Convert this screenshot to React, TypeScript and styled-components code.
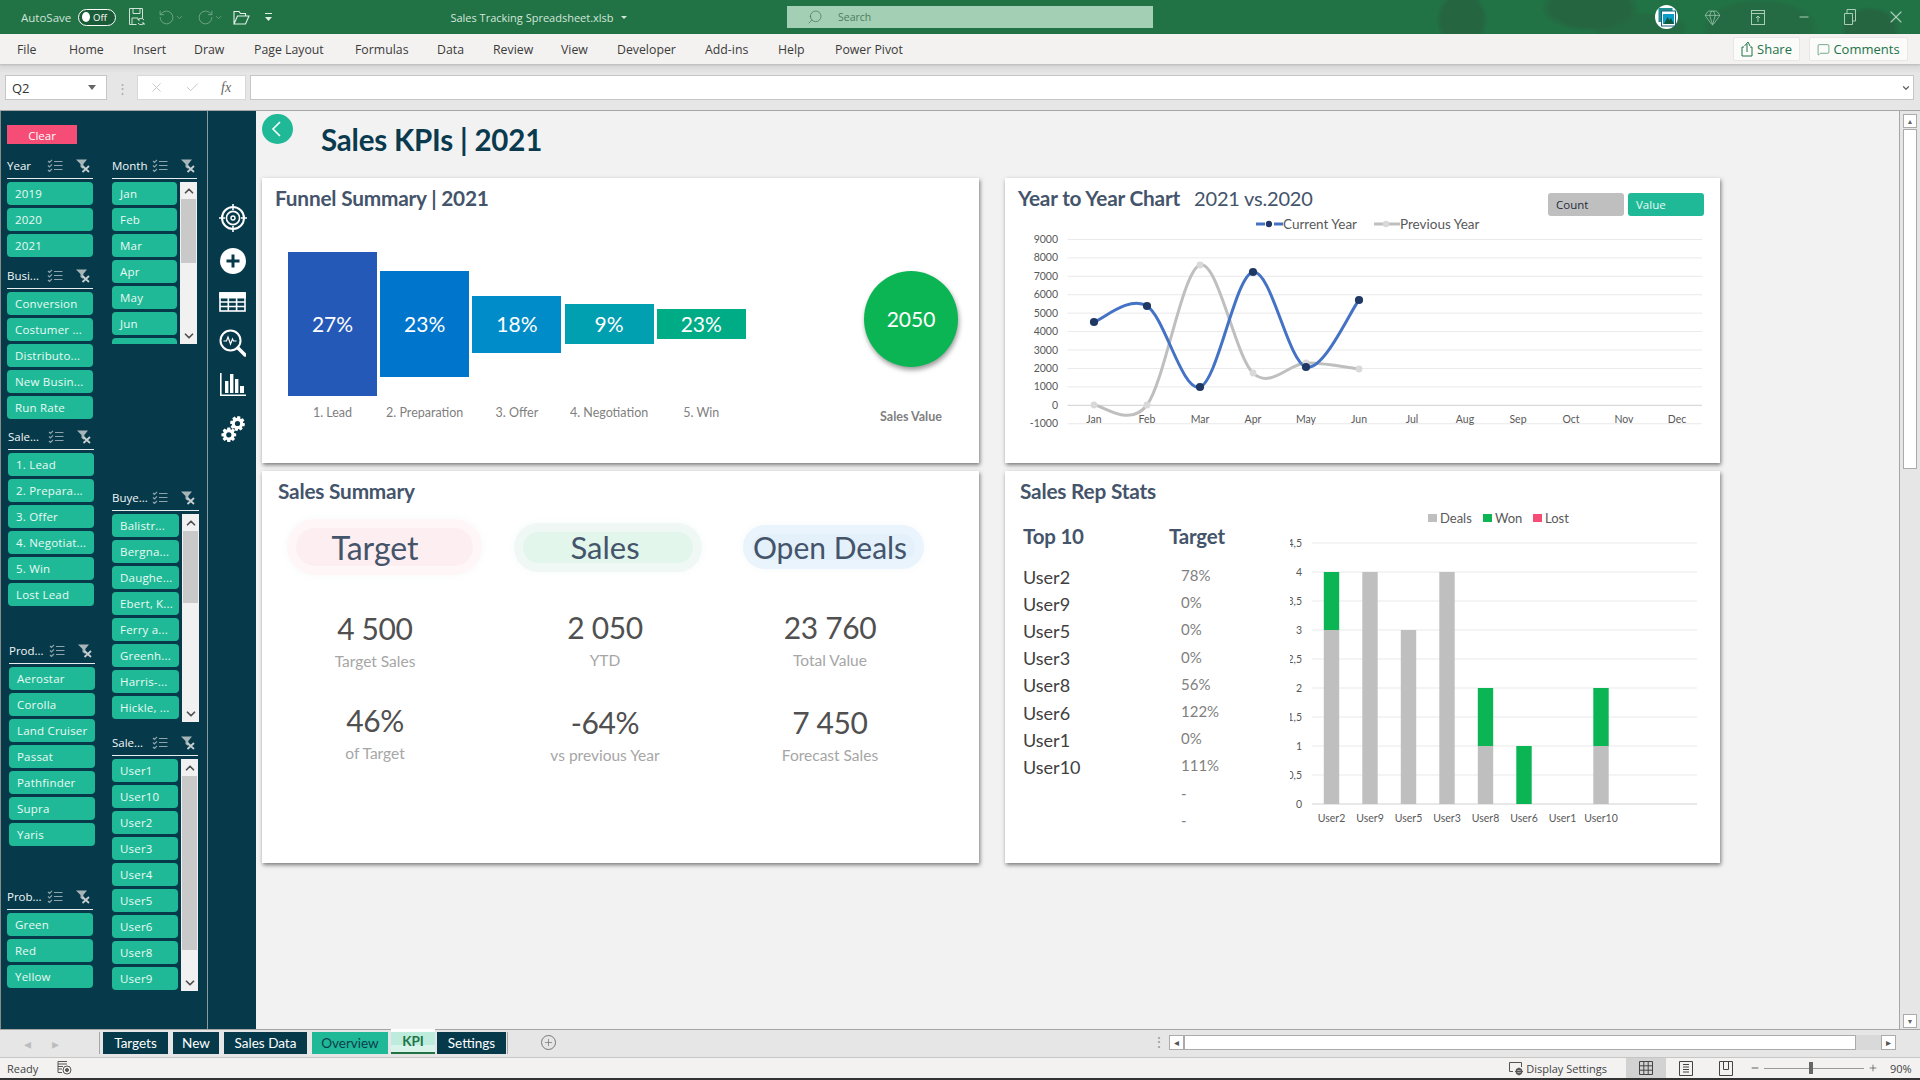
import { FC } from 'react'
import styled, { createGlobalStyle } from 'styled-components'
import { Check, ChevronDown, ChevronUp, Gem, Minus, MessageSquare, Plus, RotateCcw, RotateCw, Search, X } from 'lucide-react'

const UI_FONT = '"Open Sans", "Noto Sans", sans-serif'
const CAL_FONT = 'Lato, "Open Sans", sans-serif'

const TEAL = '#20b997'
const NAVY = '#063a4b'
const SLATE = '#44546a'

const GlobalStyle = createGlobalStyle`
  html, body {
    margin: 0;
    padding: 0;
    width: 1920px;
    height: 1080px;
    overflow: hidden;
    font-family: ${UI_FONT};
  }
  * { box-sizing: border-box; }
`

/* ---------- slicer data ---------- */

type SlicerData = { name: string; items: string[]; shift?: number; top: number }

const leftSlicers: SlicerData[] = [
  { name: 'Year', items: ['2019', '2020', '2021'], top: 10 },
  { name: 'Busi...', items: ['Conversion', 'Costumer ...', 'Distributo...', 'New Busin...', 'Run Rate'], top: 7 },
  { name: 'Sale...', shift: 1, items: ['1. Lead', '2. Prepara...', '3. Offer', '4. Negotiat...', '5. Win', 'Lost Lead'], top: 6 },
  { name: 'Prod...', shift: 2, items: ['Aerostar', 'Corolla', 'Land Cruiser', 'Passat', 'Pathfinder', 'Supra', 'Yaris'], top: 33 },
  { name: 'Prob...', items: ['Green', 'Red', 'Yellow'], top: 39 }
]

const months = ['Jan', 'Feb', 'Mar', 'Apr', 'May', 'Jun', 'Jul']
const buyers = ['Balistr...', 'Bergna...', 'Daughe...', 'Ebert, K...', 'Ferry a...', 'Greenh...', 'Harris-...', 'Hickle, ...']
const reps = ['User1', 'User10', 'User2', 'User3', 'User4', 'User5', 'User6', 'User8', 'User9']

/* ---------- small drawn icons ---------- */

const ChecklistIcon = () => (
  <svg width="16" height="13" viewBox="0 0 16 13" fill="none" stroke="#8ea3aa" strokeWidth="1.2">
    <path d="M1 2l1.5 1.5L5 .8M1 6.5L2.500 8 5 5.3M1 11l1.5 1.5L5 9.8" />
    <path d="M7 2.500h8.500M7 6.500h8.500M7 10.500h8.500" />
  </svg>
)

const ClearFilterIcon = () => (
  <svg width="16" height="14" viewBox="0 0 16 14">
    <path d="M1 .5h11L8.3 5v5L5.5 8V5z" fill="#a7b4b8" />
    <path d="M7.5 7l6.5 6M14 7l-6.500 6" stroke="#c7cfd1" strokeWidth="1.8" />
  </svg>
)

const TargetIcon = () => (
  <svg width="28" height="28" viewBox="0 0 28 28" fill="none" stroke="#fff">
    <circle cx="14" cy="14" r="11" strokeWidth="2" />
    <circle cx="14" cy="14" r="6.6" strokeWidth="1.6" />
    <circle cx="14" cy="14" r="2" strokeWidth="1.4" />
    <path d="M14 0v6M14 22v6M0 14h6M22 14h6" strokeWidth="1.6" />
  </svg>
)

const AddIcon = () => (
  <svg width="26" height="26" viewBox="0 0 26 26">
    <circle cx="13" cy="13" r="13" fill="#fff" />
    <path d="M13 6.500v13M6.500 13h13" stroke={NAVY} strokeWidth="3" />
  </svg>
)

const TableIcon = () => (
  <svg width="27" height="20" viewBox="0 0 27 20" fill="none" stroke="#fff" strokeWidth="1.6">
    <rect x="1" y="1" width="25" height="18" />
    <path d="M1 5.500h25M1 10h25M1 14.500h25M9.300 5.500V19M17.600 5.500V19" />
    <rect x="1" y="1" width="25" height="4.500" fill="#fff" />
  </svg>
)

const PulseSearchIcon = () => (
  <svg width="27" height="28" viewBox="0 0 27 28" fill="none" stroke="#fff">
    <circle cx="11.500" cy="11.500" r="10" strokeWidth="2" />
    <path d="M4.500 12h3l1.500-4 2.500 7 2-5 1 2h3" strokeWidth="1.2" />
    <path d="M19 19l7 7" strokeWidth="3.4" strokeLinecap="round" />
  </svg>
)

const BarsIcon = () => (
  <svg width="26" height="24" viewBox="0 0 26 24" fill="#fff" stroke="none">
    <rect x="5" y="8" width="3.4" height="12" />
    <rect x="10" y="1" width="3.4" height="19" />
    <rect x="15" y="6" width="3.4" height="14" />
    <rect x="20" y="13" width="4" height="7" />
    <path d="M0 0h1.600v21.400H26V23H0z" />
  </svg>
)

const gearPath = (cx: number, cy: number, outer: number, inner: number, hole: number, start: number) => {
  const teeth = 8
  const step = (Math.PI * 2) / teeth
  const pts: string[] = []
  for (let i = 0; i < teeth; i++) {
    const a = start + i * step
    const at = (r: number, o: number) => `${(cx + r * Math.cos(a + o)).toFixed(2)} ${(cy + r * Math.sin(a + o)).toFixed(2)}`
    pts.push(at(inner, -step * 0.42), at(outer, -step * 0.24), at(outer, step * 0.24), at(inner, step * 0.42))
  }
  const ring = `M${cx - hole} ${cy}a${hole} ${hole} 0 1 0 ${hole * 2} 0a${hole} ${hole} 0 1 0 ${-hole * 2} 0z`
  return `M${pts.join('L')}z${ring}`
}

const GearsIcon = () => (
  <svg width="24" height="26" viewBox="0 0 24 26">
    <path d={gearPath(16.5, 7.5, 7.5, 5.6, 2.6, 0.2)} fill="#fff" fillRule="evenodd" />
    <path d={gearPath(7.8, 18.8, 7.5, 5.6, 2.6, 0)} fill="#fff" fillRule="evenodd" />
  </svg>
)

/* ---------- chart helpers ---------- */

type Pt = [number, number]

const smoothPath = (pts: Pt[]) => {
  let d = `M${pts[0][0]} ${pts[0][1]}`
  for (let i = 0; i < pts.length - 1; i++) {
    const p0 = pts[Math.max(i - 1, 0)]
    const p1 = pts[i]
    const p2 = pts[i + 1]
    const p3 = pts[Math.min(i + 2, pts.length - 1)]
    const c1x = p1[0] + (p2[0] - p0[0]) / 6
    const c1y = p1[1] + (p2[1] - p0[1]) / 6
    const c2x = p2[0] - (p3[0] - p1[0]) / 6
    const c2y = p2[1] - (p3[1] - p1[1]) / 6
    d += ` C${c1x} ${c1y} ${c2x} ${c2y} ${p2[0]} ${p2[1]}`
  }
  return d
}

const monthNames = ['Jan', 'Feb', 'Mar', 'Apr', 'May', 'Jun', 'Jul', 'Aug', 'Sep', 'Oct', 'Nov', 'Dec']
const monthX = (i: number) => 1094 + i * 53
const valueY = (v: number) => 405.3 - v * 0.01843
const currentYear: Pt[] = [322, 306, 387, 272, 367, 300].map((y, i) => [monthX(i), y])
const previousYear: Pt[] = [405, 405, 265, 373, 363, 369].map((y, i) => [monthX(i), y])

const YearChart = () => (
  <ChartSvg width="715" height="240" viewBox="1005 216 715 240">
    <g fontFamily={CAL_FONT} fontSize="13.5" fill="#595959">
      <path d="M1256 224h9M1274 224h9" stroke="#4472c4" strokeWidth="3" />
      <circle cx="1269" cy="224" r="3.2" fill="#1f3864" />
      <text x="1283" y="228.500">Current Year</text>
      <path d="M1374 224h26" stroke="#bfbfbf" strokeWidth="3" />
      <circle cx="1386" cy="224" r="3.2" fill="#d9d9d9" />
      <text x="1400" y="228.500">Previous Year</text>
    </g>
    <g stroke="#e9e9e9" strokeWidth="1">
      {[9, 8, 7, 6, 5, 4, 3, 2, 1, -1].map(n => (
        <line key={n} x1="1067.500" x2="1702" y1={valueY(n * 1000)} y2={valueY(n * 1000)} />
      ))}
    </g>
    <line x1="1067.500" x2="1702" y1={valueY(0)} y2={valueY(0)} stroke="#d0d0d0" />
    <g fontFamily={CAL_FONT} fontSize="10.500" fill="#595959" textAnchor="end">
      {[9, 8, 7, 6, 5, 4, 3, 2, 1, 0, -1].map(n => (
        <text key={n} x="1058" y={valueY(n * 1000) + 3.5}>
          {n * 1000}
        </text>
      ))}
    </g>
    <g fontFamily={CAL_FONT} fontSize="10.500" fill="#595959" textAnchor="middle">
      {monthNames.map((m, i) => (
        <text key={m} x={monthX(i)} y="423">
          {m}
        </text>
      ))}
    </g>
    <path d={smoothPath(previousYear)} fill="none" stroke="#bfbfbf" strokeWidth="3" strokeLinecap="round" />
    <path d={smoothPath(currentYear)} fill="none" stroke="#4472c4" strokeWidth="3" strokeLinecap="round" />
    {previousYear.map(([x, y]) => (
      <circle key={x} cx={x} cy={y} r="3.4" fill="#d9d9d9" />
    ))}
    {currentYear.map(([x, y]) => (
      <circle key={x} cx={x} cy={y} r="4.1" fill="#1f3864" />
    ))}
  </ChartSvg>
)

const repBars = [
  { name: 'User2', deals: 3, won: 1 },
  { name: 'User9', deals: 4, won: 0 },
  { name: 'User5', deals: 3, won: 0 },
  { name: 'User3', deals: 4, won: 0 },
  { name: 'User8', deals: 1, won: 1 },
  { name: 'User6', deals: 0, won: 1 },
  { name: 'User1', deals: 0, won: 0 },
  { name: 'User10', deals: 1, won: 1 }
]
const BASE_Y = 804
const UNIT = 58

const RepChart = () => (
  <ChartSvg width="430" height="358" viewBox="1290 505 430 358">
    <g fontFamily={CAL_FONT} fontSize="13" fill="#595959">
      <rect x="1428" y="514" width="9" height="8" fill="#bfbfbf" />
      <text x="1440" y="522.500">Deals</text>
      <rect x="1483" y="514" width="9" height="8" fill="#0bb553" />
      <text x="1495" y="522.500">Won</text>
      <rect x="1533" y="514" width="9" height="8" fill="#f54d75" />
      <text x="1545" y="522.500">Lost</text>
    </g>
    {['4,5', '4', '3,5', '3', '2,5', '2', '1,5', '1', '0,5', '0'].map((label, i) => {
      const y = 543 + i * 29
      return (
        <g key={label}>
          <line x1="1312" x2="1697" y1={y} y2={y} stroke={i === 9 ? '#d0d0d0' : '#e9e9e9'} />
          <text x="1302" y={y + 3.5} textAnchor="end" fontFamily={CAL_FONT} fontSize="10.500" fill="#595959">
            {label}
          </text>
        </g>
      )
    })}
    {repBars.map((b, i) => {
      const cx = 1331.5 + i * 38.5
      return (
        <g key={b.name}>
          <rect x={cx - 7.7} y={BASE_Y - b.deals * UNIT} width="15.400" height={b.deals * UNIT} fill="#bfbfbf" />
          <rect x={cx - 7.7} y={BASE_Y - (b.deals + b.won) * UNIT} width="15.400" height={b.won * UNIT} fill="#0bb553" />
          <text x={cx} y="822" textAnchor="middle" fontFamily={CAL_FONT} fontSize="10.500" fill="#595959">
            {b.name}
          </text>
        </g>
      )
    })}
  </ChartSvg>
)

/* ---------- parts ---------- */

const SlicerHeadRow: FC<{ name: string }> = ({ name }) => (
  <SlicerHead>
    <SlicerName>{name}</SlicerName>
    <ChecklistIcon />
    <ClearFilterIcon />
  </SlicerHead>
)

const ScrollBar: FC<{ thumb: number }> = ({ thumb }) => (
  <ScrollTrack>
    <ScrollArrow>
      <ChevronUp size={14} strokeWidth={3} />
    </ScrollArrow>
    <ScrollThumb $h={thumb} />
    <ScrollArrow $end>
      <ChevronDown size={14} strokeWidth={3} />
    </ScrollArrow>
  </ScrollTrack>
)

const ScrollSlicer: FC<{ name: string; items: string[]; top: number; width: number; height: number; thumb: number }> = ({
  name,
  items,
  top,
  width,
  height,
  thumb
}) => (
  <Slicer $top={top} $width={width}>
    <SlicerHeadRow name={name} />
    <SlicerBody $height={height}>
      <SlicerList>
        {items.map(item => (
          <SlicerItem key={item}>{item}</SlicerItem>
        ))}
      </SlicerList>
      <ScrollBar thumb={thumb} />
    </SlicerBody>
  </Slicer>
)

const Stat: FC<{ value: string; label: string; top: number }> = ({ value, label, top }) => (
  <StatBlock $top={top}>
    <StatValue>{value}</StatValue>
    <StatLabel>{label}</StatLabel>
  </StatBlock>
)

const summary = [
  {
    pill: 'Target', width: 177, height: 38, core: '#fdeef1', glow: '#fff6f8', font: 32, nudge: 18,
    stats: [{ value: '4 500', label: 'Target Sales', top: 36 }, { value: '46%', label: 'of Target', top: 29 }]
  },
  {
    pill: 'Sales', width: 170, height: 31, core: '#e2f6eb', glow: '#f0f8f6', font: 31, nudge: 6,
    stats: [{ value: '2 050', label: 'YTD', top: 35 }, { value: '-64%', label: 'vs previous Year', top: 32 }]
  },
  {
    pill: 'Open Deals', width: 163, height: 26, core: '#e4f1fb', glow: '#eaf4fc', font: 30, nudge: 7,
    stats: [{ value: '23 760', label: 'Total Value', top: 35 }, { value: '7 450', label: 'Forecast Sales', top: 32 }]
  }
]

const funnel = [
  { label: '1. Lead', pct: '27%', height: 144, color: '#2559b7' },
  { label: '2. Preparation', pct: '23%', height: 106, color: '#0075cc' },
  { label: '3. Offer', pct: '18%', height: 57, color: '#008bc9' },
  { label: '4. Negotiation', pct: '9%', height: 40, color: '#00a0b0' },
  { label: '5. Win', pct: '23%', height: 30, color: '#00ac85' }
]

const repRows: [string, string][] = [
  ['User2', '78%'], ['User9', '0%'], ['User5', '0%'], ['User3', '0%'], ['User8', '56%'],
  ['User6', '122%'], ['User1', '0%'], ['User10', '111%'], ['', '-'], ['', '-']
]

const menuItems = [
  ['File', 52], ['Home', 64], ['Insert', 61], ['Draw', 60], ['Page Layout', 101], ['Formulas', 82], ['Data', 56],
  ['Review', 68], ['View', 56], ['Developer', 88], ['Add-ins', 73], ['Help', 57], ['Power Pivot', 80]
] as const

const tabs: { name: string; width: number; kind: 'dark' | 'teal' | 'active'; gap: number }[] = [
  { name: 'Targets', width: 65, kind: 'dark', gap: 0 },
  { name: 'New', width: 46, kind: 'dark', gap: 5 },
  { name: 'Sales Data', width: 83, kind: 'dark', gap: 5 },
  { name: 'Overview', width: 76, kind: 'teal', gap: 5 },
  { name: 'KPI', width: 44, kind: 'active', gap: 3 },
  { name: 'Settings', width: 69, kind: 'dark', gap: 2 }
]

const App = () => (
  <Page>
    <GlobalStyle />
    <TitleBar>
      <QuickAccess>
        <AutoSaveLabel>AutoSave</AutoSaveLabel>
        <Toggle>
          <ToggleKnob />
          Off
        </Toggle>
        <QatIcon $left={12}>
          <svg width="18" height="20" viewBox="0 0 18 20" fill="none" stroke="#cfe3d6" strokeWidth="1">
            <path d="M1.500 1.500h13v10M1.500 1.500v16h7M5 1.500v5h7v-5M4 17v-6h6" />
            <path d="M16 13a3.500 3.500 0 0 0-6 0M10 16a3.500 3.500 0 0 0 6 0M10 11v2h2M16 18v-2h-2" />
          </svg>
        </QatIcon>
        <QatIcon $left={12} $dim>
          <RotateCcw size={17} strokeWidth={1.2} />
          <ChevronDown size={9} />
        </QatIcon>
        <QatIcon $left={13} $dim>
          <RotateCw size={17} strokeWidth={1.2} />
          <ChevronDown size={9} />
        </QatIcon>
        <QatIcon $left={10}>
          <svg width="17" height="15" viewBox="0 0 17 15" fill="none" stroke="#e2efe7" strokeWidth="1.1">
            <path d="M1 14V1.500h5l1.500 2h5V6M1 14h11.500L16 6H4.500L1 14z" />
          </svg>
        </QatIcon>
        <QatIcon $left={14}>
          <svg width="9" height="9" viewBox="0 0 9 9" fill="#e2efe7">
            <path d="M1 0h7v1H1zM1 4h7L4.500 8z" />
          </svg>
        </QatIcon>
      </QuickAccess>
      <DocTitle>
        Sales Tracking Spreadsheet.xlsb
        <DocCaret />
      </DocTitle>
      <SearchBox>
        <Search size={16} strokeWidth={1.2} style={{ transform: 'scaleX(-1)' }} />
        Search
      </SearchBox>
      <WindowControls>
        <AvatarBadge>
          <svg width="18" height="20" viewBox="0 0 18 20">
            <rect x="0.5" y="1" width="14" height="14" fill="#1f8f8f" />
            <rect x="3.5" y="4" width="14" height="15" fill="#fff" stroke="#17607a" />
            <rect x="5" y="7" width="11" height="10" fill="#0d9bc9" />
            <path d="M6 17l3.500-7 2 3 1.500-2 3 6z" fill="#0d5a3c" />
          </svg>
        </AvatarBadge>
        <WindowButton $width={45} $left={12}>
          <Gem size={17} strokeWidth={1} />
        </WindowButton>
        <WindowButton $width={45}>
          <svg width="14" height="15" viewBox="0 0 14 15" fill="none" stroke="currentColor">
            <rect x="0.5" y="0.5" width="13" height="14" />
            <path d="M0.500 3.500h13M7 12V6M5 8l2-2 2 2" />
          </svg>
        </WindowButton>
        <WindowButton $width={47}>
          <Minus size={14} strokeWidth={1.8} />
        </WindowButton>
        <WindowButton $width={46}>
          <svg width="12" height="16" viewBox="0 0 12 16" fill="none" stroke="currentColor">
            <path d="M0.500 4.500h8v11h-8zM3 4V0.500h8.500V12H9" />
          </svg>
        </WindowButton>
        <WindowButton $width={46}>
          <X size={20} strokeWidth={1.4} />
        </WindowButton>
      </WindowControls>
    </TitleBar>

    <MenuBar>
      {menuItems.map(([label, width]) => (
        <MenuItem key={label} $width={width}>
          {label}
        </MenuItem>
      ))}
      <MenuSpacer />
      <RibbonButton $width={67}>
        <svg width="13" height="16" viewBox="0 0 13 16" fill="none" stroke="#217346">
          <path d="M3 6H1v9h10V6H9M6 11V3M3.500 5L7 1l2 4" />
        </svg>
        Share
      </RibbonButton>
      <RibbonButton $width={99}>
        <MessageSquare size={13} strokeWidth={1.1} />
        Comments
      </RibbonButton>
    </MenuBar>

    <FormulaRow>
      <NameBox>
        Q2
        <NameCaret />
      </NameBox>
      <FormulaDots>⋮</FormulaDots>
      <FormulaActions>
        <X size={15} strokeWidth={1.5} />
        <Check size={15} strokeWidth={1.5} />
        <FxMark>fx</FxMark>
      </FormulaActions>
      <FormulaInput>
        <ChevronDown size={10} strokeWidth={3} color="#666" />
      </FormulaInput>
    </FormulaRow>

    <SheetArea>
      <Sidebar>
        <SlicerColumn>
          <ClearButton>Clear</ClearButton>
          {leftSlicers.map(s => (
            <Slicer key={s.name} $top={s.top} $shift={s.shift} $width={86}>
              <SlicerHeadRow name={s.name} />
              <SlicerList>
                {s.items.map(item => (
                  <SlicerItem key={item}>{item}</SlicerItem>
                ))}
              </SlicerList>
            </Slicer>
          ))}
        </SlicerColumn>
        <SlicerColumnRight>
          <ScrollSlicer name="Month" items={months} top={0} width={85} height={162} thumb={64} />
          <ScrollSlicer name="Buye..." items={buyers} top={142} width={87} height={208} thumb={72} />
          <ScrollSlicer name="Sale..." items={reps} top={9} width={86} height={232} thumb={174} />
        </SlicerColumnRight>
        <NavRail>
          <NavIcon $h={28}>
            <TargetIcon />
          </NavIcon>
          <NavIcon $h={26} $top={16}>
            <AddIcon />
          </NavIcon>
          <NavIcon $h={20} $top={18}>
            <TableIcon />
          </NavIcon>
          <NavIcon $h={28} $top={17}>
            <PulseSearchIcon />
          </NavIcon>
          <NavIcon $h={24} $top={16}>
            <BarsIcon />
          </NavIcon>
          <NavIcon $h={26} $top={19}>
            <GearsIcon />
          </NavIcon>
        </NavRail>
      </Sidebar>

      <Dashboard>
        <PageHead>
          <BackButton>
            <svg width="12" height="18" viewBox="0 0 12 18" fill="none" stroke="#fff" strokeWidth="1.6">
              <path d="M10 2L3 9l7 7" />
            </svg>
          </BackButton>
          <PageTitle>Sales KPIs | 2021</PageTitle>
        </PageHead>
        <CardGrid>
          <Card>
            <CardTitle>Funnel Summary | 2021</CardTitle>
            <FunnelRow>
              {funnel.map(step => (
                <FunnelStep key={step.label}>
                  <FunnelBarSlot>
                    <FunnelBar $color={step.color} style={{ height: step.height }}>
                      {step.pct}
                    </FunnelBar>
                  </FunnelBarSlot>
                  <FunnelLabel>{step.label}</FunnelLabel>
                </FunnelStep>
              ))}
              <ValueColumn>
                <ValueCircle>2050</ValueCircle>
                <ValueLabel>Sales Value</ValueLabel>
              </ValueColumn>
            </FunnelRow>
          </Card>

          <Card>
            <ChartHead>
              <CardTitle>Year to Year Chart</CardTitle>
              <CardSubTitle>2021 vs.2020</CardSubTitle>
              <ToggleGroup>
                <ChartToggle>Count</ChartToggle>
                <ChartToggle $on>Value</ChartToggle>
              </ToggleGroup>
            </ChartHead>
            <YearChart />
          </Card>

          <Card>
            <CardTitle $left={16}>Sales Summary</CardTitle>
            <SummaryGrid>
              {summary.map(col => (
                <SummaryColumn key={col.pill}>
                  <PillSlot>
                    <Pill $w={col.width} $h={col.height} $core={col.core} $glow={col.glow} $font={col.font} $nudge={col.nudge}>
                      {col.pill}
                    </Pill>
                  </PillSlot>
                  {col.stats.map(s => (
                    <Stat key={s.label} {...s} />
                  ))}
                </SummaryColumn>
              ))}
            </SummaryGrid>
          </Card>

          <Card>
            <CardTitle $left={15}>Sales Rep Stats</CardTitle>
            <RepBody>
              <RepTable>
                <RepHeader>Top 10</RepHeader>
                <RepHeader>Target</RepHeader>
                {repRows.map(([user, pct], i) => (
                  <RepRow key={i}>
                    <RepUser>{user}</RepUser>
                    <RepPct>{pct}</RepPct>
                  </RepRow>
                ))}
              </RepTable>
              <RepChart />
            </RepBody>
          </Card>
        </CardGrid>
      </Dashboard>

      <VerticalScroll>
        <ScrollCell>▲</ScrollCell>
        <VerticalThumb />
        <VerticalRest />
        <ScrollCell>▼</ScrollCell>
      </VerticalScroll>
    </SheetArea>

    <TabStrip>
      <TabNav>
        <NavCaret>◂</NavCaret>
        <NavCaret>▸</NavCaret>
      </TabNav>
      <TabList>
        {tabs.map(t => (
          <SheetTab key={t.name} $width={t.width} $kind={t.kind} $gap={t.gap}>
            {t.name}
          </SheetTab>
        ))}
      </TabList>
      <AddSheet>
        <Plus size={11} strokeWidth={1.4} />
      </AddSheet>
      <StripSpacer />
      <SplitDots>⋮</SplitDots>
      <HorizontalScroll>
        <HCell>◂</HCell>
        <HThumb />
        <HRest />
        <HCell>▸</HCell>
      </HorizontalScroll>
    </TabStrip>

    <StatusBar>
      <StatusText>Ready</StatusText>
      <MacroIcon>
        <svg width="15" height="14" viewBox="0 0 15 14" fill="none" stroke="#555">
          <path d="M1 .5h9M1 3h9M1 5.500h5M1 8h4M1 .5v11h4" />
          <circle cx="10" cy="9" r="4" />
          <circle cx="10" cy="9" r="1.5" fill="#555" />
        </svg>
      </MacroIcon>
      <StatusSpacer />
      <DisplaySettings>
        <svg width="15" height="15" viewBox="0 0 15 15" fill="none" stroke="#555">
          <path d="M4 10.500H.5v-9h12V6" />
          <circle cx="10" cy="10.5" r="2.6" strokeWidth="1.6" />
          <path d="M10 6.500v8M6 10.500h8" />
        </svg>
        Display Settings
      </DisplaySettings>
      <ViewButton $active>
        <svg width="14" height="14" viewBox="0 0 14 14" fill="none" stroke="#444">
          <path d="M.5.5h13v13H.5zM.5 4.800h13M.5 9.200h13M4.800.5v13M9.200.5v13" />
        </svg>
      </ViewButton>
      <ViewButton>
        <svg width="14" height="15" viewBox="0 0 14 15" fill="none" stroke="#444">
          <path d="M.5.5h13v14H.5zM4 3.500h6M4 6h6M4 8.500h6M4 11h6" />
        </svg>
      </ViewButton>
      <ViewButton>
        <svg width="14" height="15" viewBox="0 0 14 15" fill="none" stroke="#444">
          <path d="M.5.5h13v14H.5zM4.500.5v8h5v-8" />
        </svg>
      </ViewButton>
      <ZoomStep>
        <Minus size={10} strokeWidth={2} />
      </ZoomStep>
      <ZoomSlider>
        <ZoomThumb />
      </ZoomSlider>
      <ZoomStep>
        <Plus size={10} strokeWidth={1.6} />
      </ZoomStep>
      <ZoomValue>90%</ZoomValue>
    </StatusBar>
    <BottomEdge />
  </Page>
)

const Page = styled.div`
  width: 1920px;
  height: 1080px;
  display: flex;
  flex-direction: column;
  background: #e6e6e6;
  overflow: hidden;
`

/* title bar */

const TitleBar = styled.div`
  height: 34px;
  flex: none;
  display: flex;
  align-items: center;
  color: #e6f0ea;
  background:
    radial-gradient(ellipse 26px 30px at 1462px 20px, #256641 80%, transparent 100%),
    radial-gradient(ellipse 50px 24px at 1590px 8px, #256641 80%, transparent 100%),
    radial-gradient(ellipse 50px 16px at 1640px 28px, #246a42 80%, transparent 100%),
    radial-gradient(ellipse 60px 30px at 1760px 28px, #246a42 80%, transparent 100%),
    radial-gradient(ellipse 30px 24px at 1870px 30px, #256641 80%, transparent 100%),
    #217346;
`

const QuickAccess = styled.div`
  width: 290px;
  flex: none;
  display: flex;
  align-items: center;
  padding-left: 21px;
`

const AutoSaveLabel = styled.span`
  width: 57px;
  font-size: 11.5px;
  color: #cfe3d6;
`

const Toggle = styled.div`
  width: 38px;
  height: 17px;
  border: 1.5px solid #fff;
  border-radius: 9px;
  background: #1b5c38;
  display: flex;
  align-items: center;
  gap: 3px;
  padding-left: 3px;
  font-size: 9.5px;
  color: #fff;
`

const ToggleKnob = styled.span`
  width: 8px;
  height: 10px;
  border-radius: 50%;
  background: #fff;
`

const QatIcon = styled.div<{ $left: number; $dim?: boolean }>`
  margin-left: ${p => p.$left}px;
  display: flex;
  align-items: center;
  color: #e2efe7;
  opacity: ${p => (p.$dim ? 0.45 : 1)};
`

const DocTitle = styled.div`
  width: 497px;
  flex: none;
  display: flex;
  align-items: center;
  justify-content: center;
  gap: 7px;
  font-size: 11px;
  color: #d4e6da;
`

const DocCaret = styled.span`
  border: 3px solid transparent;
  border-top: 3.5px solid #d4e6da;
  margin-top: 3px;
`

const SearchBox = styled.div`
  width: 366px;
  height: 22px;
  flex: none;
  background: #a3d0b4;
  display: flex;
  align-items: center;
  gap: 15px;
  padding-left: 20px;
  font-size: 10.5px;
  color: #4c7c60;
`

const WindowControls = styled.div`
  flex: 1;
  display: flex;
  align-items: center;
  padding-left: 502px;
`

const AvatarBadge = styled.div`
  width: 23px;
  height: 24px;
  flex: none;
  border-radius: 50%;
  background: #fff;
  display: flex;
  align-items: center;
  justify-content: center;
`

const WindowButton = styled.div<{ $width: number; $left?: number }>`
  width: ${p => p.$width}px;
  margin-left: ${p => p.$left ?? 0}px;
  flex: none;
  display: flex;
  justify-content: center;
  align-items: center;
  color: #a9cdb7;
`

/* menu */

const MenuBar = styled.div`
  height: 30px;
  flex: none;
  background: #f3f2f1;
  display: flex;
  align-items: center;
  padding: 0 12px 0 17px;
  position: relative;
  z-index: 1;
  box-shadow: 0 1px 2px rgba(0, 0, 0, 0.15);
`

const MenuItem = styled.div<{ $width: number }>`
  width: ${p => p.$width}px;
  flex: none;
  font-size: 12.3px;
  color: #3b3a39;
`

const MenuSpacer = styled.div`
  flex: 1;
`

const RibbonButton = styled.div<{ $width: number }>`
  width: ${p => p.$width}px;
  height: 24px;
  margin-left: 9px;
  flex: none;
  background: #fbfbfa;
  border: 1px solid #e8e7e6;
  border-radius: 2px;
  display: flex;
  align-items: center;
  justify-content: center;
  gap: 3px;
  font-size: 13px;
  color: #217346;
`

/* formula bar */

const FormulaRow = styled.div`
  height: 46px;
  flex: none;
  display: flex;
  align-items: flex-start;
  padding: 11px 6px 0 5px;
  background: linear-gradient(#d6d6d6, #e6e6e6 9px);
`

const NameBox = styled.div`
  width: 102px;
  height: 25px;
  flex: none;
  background: #fff;
  border: 1px solid #c6c6c6;
  display: flex;
  align-items: center;
  justify-content: space-between;
  padding: 0 10px 0 6px;
  font-size: 13px;
  color: #333;
`

const NameCaret = styled.span`
  border: 4px solid transparent;
  border-top: 5px solid #666;
  margin-top: 4px;
`

const FormulaDots = styled.div`
  width: 30px;
  height: 25px;
  flex: none;
  display: flex;
  align-items: center;
  justify-content: center;
  font-size: 13px;
  color: #aaa;
`

const FormulaActions = styled.div`
  width: 109px;
  height: 25px;
  flex: none;
  background: #fff;
  border: 1px solid #d8d8d8;
  display: flex;
  align-items: center;
  gap: 21px;
  padding-left: 11px;
  color: #c4c4c4;
`

const FxMark = styled.span`
  font-family: 'Liberation Serif', serif;
  font-style: italic;
  font-size: 14px;
  color: #666;
`

const FormulaInput = styled.div`
  flex: 1;
  height: 25px;
  margin-left: 4px;
  background: #fff;
  border: 1px solid #c6c6c6;
  display: flex;
  align-items: center;
  justify-content: flex-end;
  padding-right: 2px;
`

/* sheet */

const SheetArea = styled.div`
  height: 919px;
  flex: none;
  display: flex;
  border-top: 1px solid #a6a6a6;
`

const Sidebar = styled.aside`
  width: 256px;
  flex: none;
  display: flex;
  background: ${NAVY};
  border-left: 1px solid #8a8a8a;
`

const SlicerColumn = styled.div`
  width: 111px;
  flex: none;
  padding: 14px 0 0 6px;
`

const SlicerColumnRight = styled.div`
  width: 96px;
  flex: none;
  padding-top: 43px;
  border-right: 1px solid #8c9a9f;
`

const ClearButton = styled.div`
  width: 70px;
  height: 19px;
  background: #f54d75;
  color: #fff;
  font-size: 11.5px;
  text-align: center;
  line-height: 21px;
`

const Slicer = styled.section<{ $top: number; $shift?: number; $width: number }>`
  margin-top: ${p => p.$top}px;
  margin-left: ${p => p.$shift ?? 0}px;
  width: ${p => p.$width}px;
`

const SlicerHead = styled.div`
  height: 25px;
  border-bottom: 1px solid #e8eef0;
  display: flex;
  align-items: center;
  padding-bottom: 1px;
  gap: 12px;
`

const SlicerName = styled.span`
  width: 40px;
  margin-right: -12px;
  flex: none;
  font-size: 11.5px;
  white-space: nowrap;
  color: #f3f7f7;
`

const SlicerBody = styled.div<{ $height: number }>`
  height: ${p => p.$height}px;
  margin-top: 3px;
  display: flex;
  gap: 3px;
  overflow: hidden;
`

const SlicerList = styled.div`
  flex: 1;
  min-width: 0;
  display: flex;
  flex-direction: column;
  gap: 3px;
  padding-top: 3px;
  ${SlicerBody} & {
    padding-top: 0;
  }
`

const SlicerItem = styled.div`
  height: 23px;
  flex: none;
  border-radius: 4px;
  background: ${TEAL};
  color: #e9faf5;
  font-size: 11.5px;
  letter-spacing: 0.2px;
  line-height: 23px;
  padding-left: 8px;
  white-space: nowrap;
  overflow: hidden;
`

const ScrollTrack = styled.div`
  width: 17px;
  flex: none;
  background: #f1f1f1;
  display: flex;
  flex-direction: column;
  align-items: center;
`

const ScrollArrow = styled.div<{ $end?: boolean }>`
  height: 17px;
  flex: none;
  margin-top: ${p => (p.$end ? 'auto' : 0)};
  color: #505050;
  display: flex;
  align-items: center;
  justify-content: center;
`

const ScrollThumb = styled.div<{ $h: number }>`
  width: 15px;
  height: ${p => p.$h}px;
  flex: none;
  background: #c9c9c9;
`

const NavRail = styled.div`
  flex: 1;
  display: flex;
  flex-direction: column;
  align-items: center;
  padding: 93px 0 0 1px;
`

const NavIcon = styled.div<{ $h: number; $top?: number }>`
  height: ${p => p.$h}px;
  margin-top: ${p => p.$top ?? 0}px;
  display: flex;
`

/* dashboard */

const Dashboard = styled.main`
  flex: 1;
  min-width: 0;
  background: #f2f2f2;
  border-right: 1px solid #a6a6a6;
  padding-left: 6px;
`

const PageHead = styled.header`
  height: 67px;
  display: flex;
  padding-top: 3px;
`

const BackButton = styled.div`
  width: 31px;
  height: 30px;
  flex: none;
  border-radius: 50%;
  background: ${TEAL};
  display: flex;
  align-items: center;
  justify-content: center;
  padding-right: 4px;
`

const PageTitle = styled.h1`
  margin: 8px 0 0 28px;
  font-family: ${CAL_FONT};
  font-size: 29.5px;
  line-height: 36px;
  font-weight: 700;
  letter-spacing: -0.2px;
  white-space: nowrap;
  color: #0a3a4e;
`

const CardGrid = styled.div`
  display: grid;
  grid-template-columns: 717px 715px;
  grid-template-rows: 285px 392px;
  column-gap: 26px;
  row-gap: 8px;
`

const Card = styled.section`
  background: #fff;
  box-shadow: 1px 2px 4px rgba(0, 0, 0, 0.5);
  min-width: 0;
`

const CardTitle = styled.h2<{ $left?: number }>`
  margin: 0;
  padding: 6px 0 0 ${p => p.$left ?? 13}px;
  font-family: ${CAL_FONT};
  font-size: 20.8px;
  line-height: 28px;
  font-weight: 700;
  letter-spacing: -0.2px;
  white-space: nowrap;
  color: ${SLATE};
`

const FunnelRow = styled.div`
  display: flex;
  gap: 3.2px;
  padding: 40px 21px 0 26px;
`

const FunnelStep = styled.div`
  width: 89px;
  flex: none;
`

const FunnelBarSlot = styled.div`
  height: 144px;
  display: flex;
  align-items: center;
`

const FunnelBar = styled.div<{ $color: string }>`
  width: 100%;
  background: ${p => p.$color};
  display: flex;
  align-items: center;
  justify-content: center;
  padding-bottom: 2px;
  color: #fff;
  font-family: ${CAL_FONT};
  font-size: 21px;
`

const FunnelLabel = styled.div`
  margin-top: 8px;
  font-family: ${CAL_FONT};
  font-size: 12.500px;
  line-height: 18px;
  color: #7f7f7f;
  text-align: center;
`

const ValueColumn = styled.div`
  width: 94px;
  margin-left: auto;
  padding-top: 19px;
  flex: none;
`

const ValueCircle = styled.div`
  height: 96px;
  border-radius: 50%;
  background: #0bb553;
  box-shadow: 1px 3px 5px rgba(0, 0, 0, 0.4);
  display: flex;
  align-items: center;
  justify-content: center;
  padding-bottom: 2px;
  color: #fff;
  font-family: ${CAL_FONT};
  font-size: 21px;
`

const ValueLabel = styled.div`
  margin-top: 41px;
  font-family: ${CAL_FONT};
  font-size: 12.500px;
  line-height: 18px;
  font-weight: 700;
  color: #7f7f7f;
  text-align: center;
  white-space: nowrap;
`

const ChartHead = styled.div`
  display: flex;
  align-items: flex-start;
  height: 38px;
  padding-right: 16px;
`

const CardSubTitle = styled.span`
  margin: 6px 0 0 14px;
  font-family: ${CAL_FONT};
  font-size: 20px;
  line-height: 28px;
  letter-spacing: -0.2px;
  color: ${SLATE};
`

const ToggleGroup = styled.div`
  margin: 15px 0 0 auto;
  display: flex;
  gap: 4px;
`

const ChartToggle = styled.div<{ $on?: boolean }>`
  width: 76px;
  height: 23px;
  border-radius: 3px;
  padding-left: 8px;
  background: ${p => (p.$on ? TEAL : '#bfbfbf')};
  color: ${p => (p.$on ? '#e9faf5' : '#1f2d3d')};
  font-size: 11.500px;
  line-height: 23px;
`

const ChartSvg = styled.svg`
  display: block;
`

const SummaryGrid = styled.div`
  display: grid;
  grid-template-columns: 226px 234px 216px;
  padding-top: 17px;
`

const SummaryColumn = styled.div`
  display: flex;
  flex-direction: column;
  align-items: center;
`

const PillSlot = styled.div`
  height: 50px;
  display: flex;
  align-items: center;
`

const Pill = styled.div<{ $w: number; $h: number; $core: string; $glow: string; $font: number; $nudge: number }>`
  width: ${p => p.$w}px;
  height: ${p => p.$h}px;
  margin-left: ${p => p.$nudge}px;
  padding-right: ${p => p.$nudge}px;
  border-radius: ${p => p.$h / 2}px;
  background: ${p => p.$core};
  box-shadow: 0 0 0 9px ${p => p.$glow}, 0 0 6px 12px #fbfcfd;
  display: flex;
  align-items: center;
  justify-content: center;
  font-family: ${CAL_FONT};
  font-size: ${p => p.$font}px;
  white-space: nowrap;
  color: ${SLATE};
`

const StatBlock = styled.div<{ $top: number }>`
  margin-top: ${p => p.$top}px;
  text-align: center;
`

const StatValue = styled.div`
  font-family: ${CAL_FONT};
  font-size: 30px;
  line-height: 40px;
  letter-spacing: -0.4px;
  color: #505050;
`

const StatLabel = styled.div`
  margin-top: 3px;
  font-family: ${CAL_FONT};
  font-size: 15.500px;
  line-height: 20px;
  color: #a6a6a6;
`

const RepBody = styled.div`
  display: flex;
`

const RepTable = styled.div`
  width: 285px;
  flex: none;
  padding: 16px 0 0 18px;
  display: grid;
  grid-template-columns: 146px 1fr;
  grid-auto-rows: 27.2px;
  align-items: center;
  grid-template-rows: 42px;
`

const RepHeader = styled.div`
  font-family: ${CAL_FONT};
  font-size: 20.5px;
  font-weight: 700;
  letter-spacing: -0.2px;
  color: ${SLATE};
  padding-bottom: 13px;
`

const RepRow = styled.div`
  display: contents;
`

const RepUser = styled.div`
  font-family: ${CAL_FONT};
  font-size: 18px;
  color: #404040;
`

const RepPct = styled.div`
  margin-top: -3px;
  padding-left: 12px;
  font-family: ${CAL_FONT};
  font-size: 15px;
  color: #7f7f7f;
`

const VerticalScroll = styled.div`
  width: 20px;
  flex: none;
  display: flex;
  flex-direction: column;
  padding: 3px 3px 1px 3px;
  gap: 1px;
`

const ScrollCell = styled.div`
  height: 14px;
  flex: none;
  background: #fff;
  border: 1px solid #ababab;
  color: #666;
  font-size: 7px;
  display: flex;
  align-items: center;
  justify-content: center;
`

const VerticalThumb = styled.div`
  height: 340px;
  flex: none;
  background: #fff;
  border: 1px solid #ababab;
`

const VerticalRest = styled.div`
  flex: 1;
`

/* sheet tabs */

const TabStrip = styled.div`
  height: 29px;
  flex: none;
  display: flex;
  align-items: flex-start;
  padding-top: 2px;
  background: #e6e6e6;
  border-top: 1px solid #a6a6a6;
  border-bottom: 1px solid #c6c6c6;
`

const TabNav = styled.div`
  width: 100px;
  height: 22px;
  flex: none;
  display: flex;
  gap: 18px;
  align-items: center;
  padding-left: 24px;
  border-right: 1px solid #a6a6a6;
  color: #bdbdbd;
  font-size: 14px;
`

const NavCaret = styled.span`
  width: 10px;
`

const TabList = styled.div`
  display: flex;
  padding: 0 2px 0 3px;
  width: 408px;
  flex: none;
  border-right: 1px solid #a6a6a6;
  height: 22px;
`

const SheetTab = styled.div<{ $width: number; $kind: 'dark' | 'teal' | 'active'; $gap: number }>`
  width: ${p => p.$width}px;
  margin-left: ${p => p.$gap}px;
  height: ${p => (p.$kind === 'active' ? 25 : 22)}px;
  margin-top: ${p => (p.$kind === 'active' ? -3 : 0)}px;
  flex: none;
  display: flex;
  align-items: center;
  justify-content: center;
  font-family: ${CAL_FONT};
  font-size: 13.5px;
  font-weight: ${p => (p.$kind === 'active' ? 700 : 400)};
  color: ${p => (p.$kind === 'dark' ? '#fff' : p.$kind === 'teal' ? '#0b3d4e' : '#217346')};
  background: ${p => (p.$kind === 'dark' ? NAVY : p.$kind === 'teal' ? TEAL : 'linear-gradient(#fff 3px, #bdecdc 3px, #bdecdc 16px, #d7f3ea 16px)')};
  border-bottom: ${p => (p.$kind === 'active' ? '2px solid #217346' : 'none')};
`

const AddSheet = styled.div`
  width: 15px;
  height: 15px;
  margin: 3px 0 0 33px;
  flex: none;
  border: 1px solid #777;
  border-radius: 50%;
  color: #666;
  display: flex;
  align-items: center;
  justify-content: center;
`

const StripSpacer = styled.div`
  flex: 1;
`

const SplitDots = styled.div`
  width: 17px;
  flex: none;
  font-size: 14px;
  line-height: 20px;
  color: #999;
`

const HorizontalScroll = styled.div`
  width: 727px;
  height: 15px;
  margin: 3px 24px 0 0;
  flex: none;
  display: flex;
`

const HCell = styled.div`
  width: 15px;
  flex: none;
  background: #fff;
  border: 1px solid #ababab;
  color: #555;
  font-size: 10px;
  line-height: 12px;
  text-align: center;
`

const HThumb = styled.div`
  width: 672px;
  flex: none;
  background: #fff;
  border: 1px solid #ababab;
`

const HRest = styled.div`
  flex: 1;
  background: #d9d9d9;
`

/* status bar */

const StatusBar = styled.div`
  height: 20px;
  flex: none;
  display: flex;
  align-items: center;
  background: #f3f2f1;
  padding-left: 7px;
  font-size: 11px;
  color: #444;
`

const StatusText = styled.span`
  width: 50px;
`

const MacroIcon = styled.span`
  display: flex;
`

const StatusSpacer = styled.div`
  flex: 1;
`

const DisplaySettings = styled.div`
  display: flex;
  align-items: center;
  gap: 2px;
  margin-right: 19px;
`

const ViewButton = styled.div<{ $active?: boolean }>`
  width: 40px;
  height: 20px;
  flex: none;
  display: flex;
  align-items: center;
  justify-content: center;
  background: ${p => (p.$active ? '#d2d2d2' : 'transparent')};
`

const ZoomStep = styled.div`
  width: 18px;
  flex: none;
  display: flex;
  justify-content: center;
  color: #444;
`

const ZoomSlider = styled.div`
  width: 100px;
  height: 1px;
  flex: none;
  background: #999;
  display: flex;
  align-items: center;
  padding-left: 45px;
`

const ZoomThumb = styled.span`
  width: 4px;
  height: 12px;
  flex: none;
  background: #666;
`

const ZoomValue = styled.div`
  width: 38px;
  padding-left: 8px;
  flex: none;
`

const BottomEdge = styled.div`
  flex: 1;
  background: #333;
`

export default App
